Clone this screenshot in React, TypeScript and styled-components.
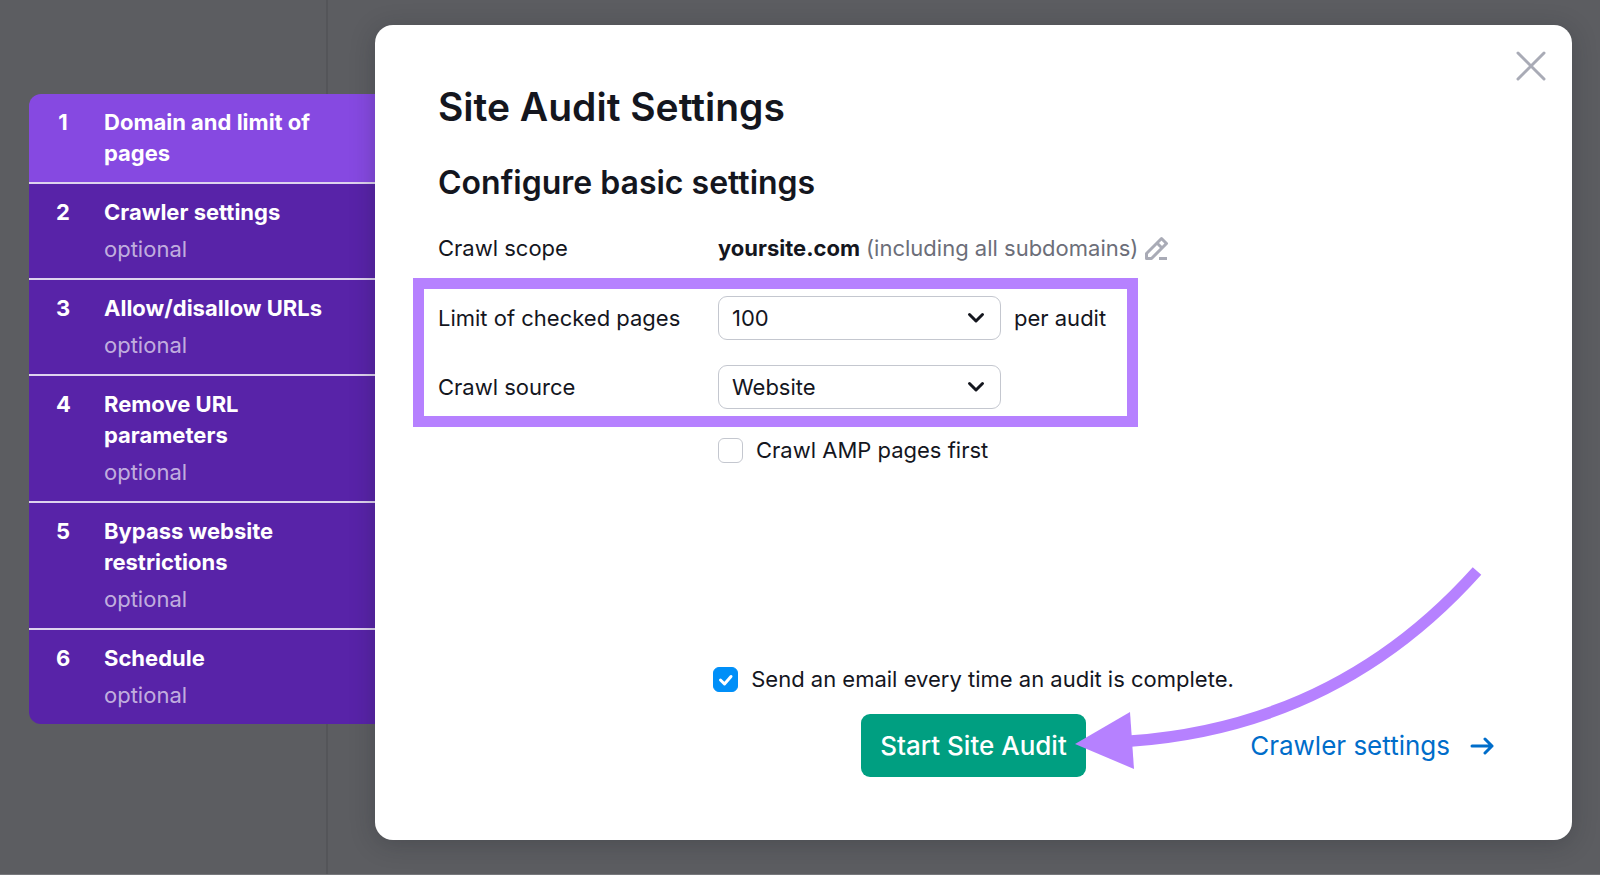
import React from "react";
import styled, { createGlobalStyle } from "styled-components";

const GlobalStyle = createGlobalStyle`
  *, *::before, *::after { box-sizing: border-box; }
  body {
    margin: 0;
    background: #5c5d61;
    color: #14161e;
    font-family: Inter, "Liberation Sans", sans-serif;
    font-size: 22px;
    line-height: 31px;
  }
  button, select, input { font: inherit; color: inherit; }
`;

const Backdrop = styled.div`
  position: relative;
  display: flex;
  align-items: stretch;
  min-height: 100vh;
  padding: 25px 28px 34px 29px;
  border-bottom: 1px solid #77787c;

  &::before {
    content: "";
    position: absolute;
    top: 0;
    bottom: 0;
    left: 326px;
    width: 2px;
    background: #545559;
  }
`;

const Steps = styled.ol`
  position: relative;
  flex: none;
  align-self: flex-start;
  width: 346px;
  margin: 69px 0 0;
  padding: 0;
  list-style: none;
  border-radius: 12px 0 0 12px;
  overflow: hidden;
`;

const Step = styled.li<{ $active?: boolean }>`
  background: ${(p) => (p.$active ? "#8649e1" : "#5823a8")};

  & + & { border-top: 2px solid #ded3ee; }
`;

const StepButton = styled.button`
  display: grid;
  grid-template-columns: 48px 1fr;
  row-gap: 6px;
  width: 100%;
  padding: 13px 46px 13px 27px;
  border: 0;
  background: none;
  color: #fff;
  text-align: left;
  cursor: pointer;
`;

const StepTitle = styled.span`
  font-weight: 700;
`;

const StepNumber = styled(StepTitle)`
  width: 14px;
  text-align: center;
`;

const StepNote = styled.span`
  grid-column: 2;
  color: rgba(255, 255, 255, 0.65);
`;

const Dialog = styled.main`
  position: relative;
  flex: 1;
  min-width: 0;
  display: flex;
  flex-direction: column;
  padding: 58px 63px 63px;
  border-radius: 18px;
  background: #fff;
  box-shadow: 0 4px 24px rgba(25, 27, 35, 0.25);
`;

const CloseButton = styled.button`
  position: absolute;
  top: 20px;
  right: 20px;
  display: flex;
  padding: 5px;
  border: 0;
  background: none;
  cursor: pointer;
`;

const Title = styled.h1`
  margin: 0;
  font-size: 39px;
  line-height: 48px;
  font-weight: 600;
`;

const Subtitle = styled.h2`
  margin: 32px 0 0;
  font-size: 32px;
  line-height: 40px;
  font-weight: 600;
`;

const Row = styled.div`
  display: grid;
  grid-template-columns: 280px 1fr;
  align-items: center;
`;

const ScopeRow = styled(Row)`
  margin-top: 30px;
`;

const Value = styled.div`
  display: flex;
  align-items: center;
  gap: 6px;
`;

const Muted = styled.span`
  color: #6c6e79;
`;

const EditButton = styled.button`
  display: flex;
  padding: 0;
  border: 0;
  background: none;
  cursor: pointer;
`;

const Highlight = styled.div`
  display: flex;
  flex-direction: column;
  align-self: flex-start;
  gap: 25px;
  width: 725px;
  margin: 14px 0 0 -25px;
  padding: 7px 14px;
  border: 11px solid #b681ff;
`;

const SelectRow = styled(Row)`
  grid-template-columns: 280px 283px 1fr;
`;

const SelectBox = styled.div`
  display: grid;
  align-items: center;

  > * { grid-area: 1 / 1; }
  > svg { justify-self: end; margin-right: 16px; pointer-events: none; }
`;

const Select = styled.select`
  appearance: none;
  width: 100%;
  height: 44px;
  padding: 0 13px;
  border: 1px solid #c4c7cf;
  border-radius: 9px;
  background: #fff;
`;

const Suffix = styled.span`
  margin-left: 13px;
`;

const CheckLabel = styled.label`
  display: flex;
  align-items: center;
  gap: 13px;
`;

const AmpRow = styled(CheckLabel)`
  margin: 8px 0 0 280px;
`;

const Checkbox = styled.input`
  appearance: none;
  flex: none;
  width: 25px;
  height: 25px;
  margin: 0;
  border: 1px solid #c4c7cf;
  border-radius: 6px;
  background: #fff;

  &:checked {
    border-color: #008ff8;
    background: #008ff8
      url("data:image/svg+xml,%3Csvg xmlns='http://www.w3.org/2000/svg' viewBox='0 0 25 25' fill='none' stroke='white' stroke-width='3' stroke-linecap='round' stroke-linejoin='round'%3E%3Cpath d='M7.5 13l4 4 6.500-7.500'/%3E%3C/svg%3E")
      center / 25px 25px;
  }
`;

const Footer = styled.footer`
  display: flex;
  flex-direction: column;
  gap: 19px;
  margin-top: auto;
  padding-top: 40px;
`;

const EmailRow = styled(CheckLabel)`
  align-self: center;
`;

const Actions = styled.div`
  display: grid;
  grid-template-columns: 1fr auto 1fr;
  align-items: center;
`;

const StartSlot = styled.div`
  position: relative;
  grid-column: 2;
`;

const StartButton = styled.button`
  height: 63px;
  padding: 0 19px;
  border: 0;
  border-radius: 9px;
  background: #009f81;
  color: #fff;
  font-size: 26px;
  font-weight: 500;
  white-space: nowrap;
  cursor: pointer;
`;

const Pointer = styled.svg`
  position: absolute;
  right: -404px;
  top: -150px;
  width: 420px;
  height: 210px;
  pointer-events: none;
`;

const NextLink = styled.a`
  justify-self: end;
  display: flex;
  align-items: center;
  gap: 20px;
  padding-right: 15px;
  color: #006dca;
  font-size: 26px;
  text-decoration: none;
`;

const steps = [
  { title: "Domain and limit of pages", optional: false },
  { title: "Crawler settings", optional: true },
  { title: "Allow/disallow URLs", optional: true },
  { title: "Remove URL parameters", optional: true },
  { title: "Bypass website restrictions", optional: true },
  { title: "Schedule", optional: true },
];

const Chevron = () => (
  <svg width="18" height="12" viewBox="0 0 18 12" fill="none" stroke="#14161e" strokeWidth="3" strokeLinecap="round" strokeLinejoin="round" aria-hidden="true">
    <path d="M2.500 2.500L9 9l6.500-6.500" />
  </svg>
);

export default function App() {
  return (
    <>
      <GlobalStyle />
      <Backdrop>
        <Steps>
          {steps.map((step, i) => (
            <Step key={step.title} $active={i === 0}>
              <StepButton type="button">
                <StepNumber>{i + 1}</StepNumber>
                <StepTitle>{step.title}</StepTitle>
                {step.optional && <StepNote>optional</StepNote>}
              </StepButton>
            </Step>
          ))}
        </Steps>
        <Dialog>
          <CloseButton type="button" aria-label="Close">
            <svg width="32" height="32" viewBox="0 0 32 32" fill="none" stroke="#a9abb6" strokeWidth="3" strokeLinecap="round">
              <path d="M3 3l26 26M29 3L3 29" />
            </svg>
          </CloseButton>
          <Title>Site Audit Settings</Title>
          <Subtitle>Configure basic settings</Subtitle>
          <ScopeRow>
            <span>Crawl scope</span>
            <Value>
              <b>yoursite.com</b>
              <Muted>(including all subdomains)</Muted>
              <EditButton type="button" aria-label="Edit crawl scope">
                <svg width="25" height="25" viewBox="0 0 25 25" fill="none" stroke="#a9abb6" strokeWidth="3" strokeLinejoin="round" aria-hidden="true">
                  <path d="M2.500 22.500v-5L17.500 2.500l5 5L7.500 22.500zM13 7l5 5" />
                  <path d="M15 22.500h8" />
                </svg>
              </EditButton>
            </Value>
          </ScopeRow>
          <Highlight>
            <SelectRow>
              <label htmlFor="limit">Limit of checked pages</label>
              <SelectBox>
                <Select id="limit" defaultValue="100">
                  <option>100</option>
                </Select>
                <Chevron />
              </SelectBox>
              <Suffix>per audit</Suffix>
            </SelectRow>
            <SelectRow>
              <label htmlFor="source">Crawl source</label>
              <SelectBox>
                <Select id="source" defaultValue="Website">
                  <option>Website</option>
                </Select>
                <Chevron />
              </SelectBox>
            </SelectRow>
          </Highlight>
          <AmpRow>
            <Checkbox type="checkbox" />
            Crawl AMP pages first
          </AmpRow>
          <Footer>
            <EmailRow>
              <Checkbox type="checkbox" defaultChecked />
              Send an email every time an audit is complete.
            </EmailRow>
            <Actions>
              <StartSlot>
                <StartButton type="button">Start Site Audit</StartButton>
                <Pointer viewBox="0 0 420 210" aria-hidden="true">
                  <path d="M61 177Q268 162 407 7" fill="none" stroke="#b681ff" strokeWidth="11.500" />
                  <path d="M5 180L60 148L64 205Z" fill="#b681ff" />
                </Pointer>
              </StartSlot>
              <NextLink href="#crawler-settings">
                Crawler settings
                <svg width="24" height="20" viewBox="0 0 24 20" fill="none" stroke="currentColor" strokeWidth="3" strokeLinecap="round" strokeLinejoin="round" aria-hidden="true">
                  <path d="M2 10h20M15 3l7 7-7 7" />
                </svg>
              </NextLink>
            </Actions>
          </Footer>
        </Dialog>
      </Backdrop>
    </>
  );
}
